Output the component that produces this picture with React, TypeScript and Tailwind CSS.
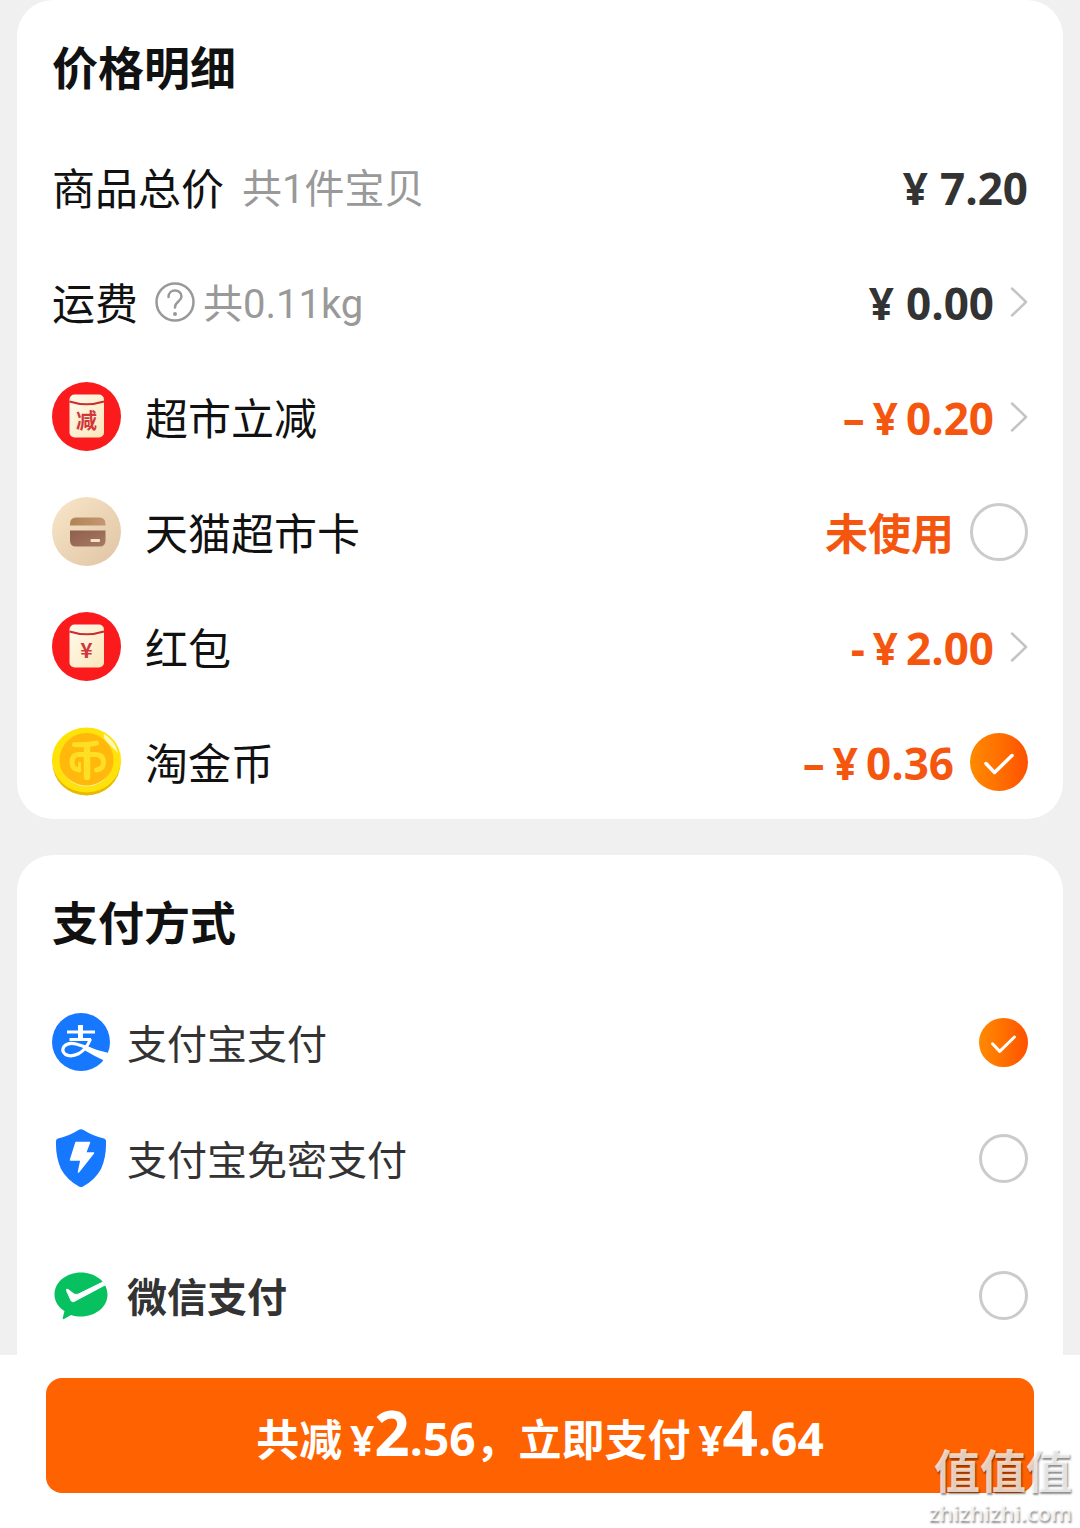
import { useState, type ReactNode } from "react";

function PacketIcon({ mark, size }: { mark: string; size: number }) {
  return (
    <svg viewBox="0 0 69 69" className="size-[69px] shrink-0" aria-hidden="true">
      <defs>
        <linearGradient id="packet" x1="0" y1="0" x2="1" y2="1">
          <stop offset="0" stopColor="#fffbf0" />
          <stop offset="1" stopColor="#fbe6b8" />
        </linearGradient>
      </defs>
      <circle cx="34.5" cy="34.5" r="34.5" fill="#fb1a1c" />
      <rect x="17.5" y="12.5" width="34.5" height="43" rx="5" fill="url(#packet)" />
      <path d="M17.5 19.5Q34.5 25 52 19.5" fill="none" stroke="#c9302b" strokeWidth="2" />
      <text x="34.5" y={38 + size * 0.36} textAnchor="middle" fontSize={size} fontWeight="700" fill="#d0373a">
        {mark}
      </text>
    </svg>
  );
}

function CardIcon() {
  return (
    <svg viewBox="0 0 69 69" className="size-[69px] shrink-0" aria-hidden="true">
      <defs>
        <linearGradient id="cardDisc" x1="0" y1="0" x2="1" y2="1">
          <stop offset="0" stopColor="#f9e6c9" />
          <stop offset="1" stopColor="#dfc4a4" />
        </linearGradient>
        <linearGradient id="cardTop" x1="0" y1="0" x2="1" y2="0">
          <stop offset="0" stopColor="#b08455" />
          <stop offset="1" stopColor="#c39872" />
        </linearGradient>
        <linearGradient id="cardBody" x1="0" y1="0" x2="1" y2="1">
          <stop offset="0" stopColor="#8f5f4d" />
          <stop offset="1" stopColor="#a67a64" />
        </linearGradient>
      </defs>
      <circle cx="34.5" cy="34.5" r="34.5" fill="url(#cardDisc)" />
      <path d="M18 28.500V27Q18 20.500 24 20.500H47.500Q53.500 20.500 53.500 27V28.500Z" fill="url(#cardTop)" />
      <path d="M18 33.500H53.500V43.500Q53.500 49.500 47.500 49.500H24Q18 49.500 18 43.500Z" fill="url(#cardBody)" />
      <rect x="38.500" y="42" width="9.500" height="3" rx="1" fill="#f6e2cb" />
    </svg>
  );
}

function CoinIcon() {
  return (
    <svg viewBox="0 0 69 69" className="size-[69px] shrink-0" aria-hidden="true">
      <ellipse cx="34.5" cy="36" rx="34" ry="32.500" fill="#e9b800" />
      <ellipse cx="34.500" cy="33" rx="34.500" ry="32.500" fill="#ffe20a" />
      <circle cx="34.500" cy="33" r="27" fill="#ffb80b" />
      <path d="M10 44A27 27 0 0 0 59 44A28 28 0 0 1 10 44Z" fill="#fff27a" />
      <path d="M52 7Q56 9 61 15Q65 20 66 26Q60 20 55 15Q51 11 52 7Z" fill="#fff9b8" />
      <g fill="none" stroke="#ffdf24" strokeLinecap="round" strokeLinejoin="round">
        <path d="M22.500 17.500Q34 18.500 44.500 16" strokeWidth="5" />
        <path d="M35 19V50" strokeWidth="6.500" />
        <path d="M27 43Q20 42 20 35.500Q20 27.500 27 27.500H43Q51.500 27.500 51.500 35.500Q51.500 42 44.500 43" strokeWidth="5" />
        <path d="M27.500 36V42" strokeWidth="3" />
      </g>
    </svg>
  );
}

function AlipayIcon() {
  return (
    <svg viewBox="0 0 58 58" className="size-[58px] shrink-0" aria-hidden="true">
      <circle cx="29" cy="29" r="29" fill="#1677ff" />
      <g fill="none" stroke="#fff">
        <path d="M15 19H43M17.500 26.500H39" strokeWidth="3" />
        <path d="M28.500 12V26" strokeWidth="5" />
        <path d="M38.500 26Q34.500 36 27 40.500Q19 44.500 13.500 41.500Q9 38 12 33.500Q16 29 24 31Q30 32.500 38 36" strokeWidth="3.200" />
      </g>
      <path d="M36 33.500Q46 38 56.800 40L53 48Q43 43.500 33 37.500Z" fill="#fff" />
    </svg>
  );
}

function ShieldIcon() {
  return (
    <svg viewBox="0 0 58 58" className="size-[58px] shrink-0" aria-hidden="true">
      <path d="M26.500 1Q29 -0.500 31.500 1Q41 7 52 9.500Q54.200 10 54 12.500Q54.500 28 49 40Q43 51 31 57.500Q29 58.500 27 57.500Q15 51 9 40Q3.500 28 4 12.500Q3.800 10 6 9.500Q17 7 26.500 1Z" fill="#1677ff" />
      <path d="M24 13.500H37.500L33.500 24H41.500L26.500 43L29 31H18.500Z" fill="#fff" stroke="#fff" strokeWidth="1.500" strokeLinejoin="round" />
    </svg>
  );
}

function WechatPayIcon() {
  return (
    <svg viewBox="0 0 58 58" className="size-[58px] shrink-0" aria-hidden="true">
      <path
        d="M29 6.500C43.500 6.500 55.500 16 55.500 28.500S43.500 50.500 29 50.500C25.500 50.500 22 50 19 49L12 53Q10.500 53.500 10.700 52L12.500 45C6 41 2.500 35 2.500 28.500C2.500 16 14.500 6.500 29 6.500Z"
        fill="#07c160"
      />
      <path d="M14.500 24.500Q14 22.500 16 23.500L22 28Q24 29 26.500 28L51 16L54 18.500L22 35.500Q20 36.500 19 34.500Z" fill="#fff" stroke="#fff" strokeLinejoin="round" />
    </svg>
  );
}

function HelpIcon() {
  return (
    <svg viewBox="0 0 40 40" className="size-10" fill="none" stroke="#999" strokeWidth="2.500" strokeLinecap="round" aria-hidden="true">
      <circle cx="20" cy="20" r="18.500" />
      <path d="M13.500 15C13.500 6.500 26.500 6.500 26.500 14.500C26.500 19.500 20 19 20 25.500" />
      <circle cx="20" cy="32" r="2" fill="#999" stroke="none" />
    </svg>
  );
}

function Chevron() {
  return (
    <svg viewBox="0 0 18 32" className="h-8 w-[18px] shrink-0" fill="none" stroke="#c4c4c4" strokeWidth="2.500" strokeLinecap="round" strokeLinejoin="round" aria-hidden="true">
      <path d="M2 2.500L16 16L2 29.500" />
    </svg>
  );
}

function Tick() {
  return (
    <svg viewBox="0 0 58 58" className="pointer-events-none absolute inset-0 hidden size-full peer-checked:block" fill="none" stroke="#fff" strokeWidth="3.500" strokeLinecap="round" strokeLinejoin="round" aria-hidden="true">
      <path d="M16 30.500L24.500 39.500L42 22.500" />
    </svg>
  );
}

const mark =
  "peer size-full appearance-none rounded-full border-3 border-[#cbcbcb] bg-white checked:border-0 checked:bg-linear-to-r checked:from-[#ff8a00] checked:to-[#ff5000]";

function Toggle({ id, initial }: { id: string; initial: boolean }) {
  const [on, setOn] = useState(initial);
  return (
    <span className="relative block size-[58px] shrink-0">
      <input id={id} type="checkbox" checked={on} onChange={() => setOn(!on)} className={mark} />
      <Tick />
    </span>
  );
}

function Section({ title, children }: { title: string; children: ReactNode }) {
  return (
    <section className="px-[35px]">
      <h2 className="flex h-[129px] items-start pt-10 text-[46px] leading-[50px] font-bold text-[#111]">{title}</h2>
      {children}
    </section>
  );
}

function Row({ children }: { children: ReactNode }) {
  return <div className="flex h-[115px] items-center justify-between text-[43px] leading-none">{children}</div>;
}

const note = "font-['Roboto','Noto_Sans_CJK_SC',sans-serif] pt-1.5 text-[40px] text-[#999]";
const digits = "font-['Open_Sans','Noto_Sans_CJK_SC',sans-serif] pt-0.5 text-[44px] font-bold";

function Price({ value }: { value: string }) {
  return (
    <span className={`flex gap-3 text-[#333] ${digits}`}>
      <span>¥</span>
      <span>{value}</span>
    </span>
  );
}

function Saving({ sign, value }: { sign: string; value: string }) {
  return (
    <span className={`flex gap-2 text-[#f4560f] ${digits}`}>
      <span>{sign}</span>
      <span>¥</span>
      <span>{value}</span>
    </span>
  );
}

const end = "flex items-center gap-4";

const methods = [
  { id: "alipay", label: "支付宝支付", icon: <AlipayIcon />, row: "" },
  { id: "alipay-fast", label: "支付宝免密支付", icon: <ShieldIcon />, row: "" },
  { id: "wechat", label: "微信支付", icon: <WechatPayIcon />, row: "mt-[21px] font-bold" },
];

function ButtonPrice({ whole, cents }: { whole: string; cents: string }) {
  return (
    <span className="ml-2 font-['Open_Sans',sans-serif] text-[46px] font-bold">
      <span className="text-[42px]">¥</span>
      <span className="text-[62px]">{whole}</span>
      {cents}
    </span>
  );
}

export default function App() {
  const [method, setMethod] = useState("alipay");
  return (
    <div className="relative flex min-h-screen flex-col bg-[#f0f0f0] font-['Noto_Sans_CJK_SC',sans-serif] text-[#111]" lang="zh-CN">
      <main className="flex grow flex-col gap-9 px-[17px]">
        <div className="rounded-[36px] bg-white">
          <Section title="价格明细">
            <Row>
              <div className="flex items-center gap-[18px]">
                <span>商品总价</span>
                <span className={note}>共1件宝贝</span>
              </div>
              <Price value="7.20" />
            </Row>
            <Row>
              <div className="flex items-center">
                <span>运费</span>
                <button type="button" aria-label="运费说明" className="mr-2 ml-[17px]">
                  <HelpIcon />
                </button>
                <span className={note}>共0.11kg</span>
              </div>
              <button type="button" className={end}>
                <Price value="0.00" />
                <Chevron />
              </button>
            </Row>
            <Row>
              <div className="flex items-center gap-6">
                <PacketIcon mark="减" size={21} />
                <span>超市立减</span>
              </div>
              <button type="button" className={end}>
                <Saving sign="–" value="0.20" />
                <Chevron />
              </button>
            </Row>
            <Row>
              <label htmlFor="card" className="flex items-center gap-6">
                <CardIcon />
                <span>天猫超市卡</span>
              </label>
              <div className={end}>
                <span className="font-bold text-[#f4560f]">未使用</span>
                <Toggle id="card" initial={false} />
              </div>
            </Row>
            <Row>
              <div className="flex items-center gap-6">
                <PacketIcon mark="¥" size={21} />
                <span>红包</span>
              </div>
              <button type="button" className={end}>
                <Saving sign="-" value="2.00" />
                <Chevron />
              </button>
            </Row>
            <Row>
              <label htmlFor="coin" className="flex items-center gap-6">
                <CoinIcon />
                <span>淘金币</span>
              </label>
              <div className={end}>
                <Saving sign="–" value="0.36" />
                <Toggle id="coin" initial={true} />
              </div>
            </Row>
          </Section>
        </div>

        <div className="grow rounded-t-[36px] bg-white">
          <Section title="支付方式">
            {methods.map((m) => (
              <div key={m.id} className={`flex h-[116px] items-center justify-between text-[40px] leading-none text-[#333] ${m.row}`}>
                <label htmlFor={m.id} className="flex items-center gap-[17px]">
                  {m.icon}
                  <span>{m.label}</span>
                </label>
                <span className="relative block size-[49px] shrink-0">
                  <input id={m.id} type="radio" name="method" checked={method === m.id} onChange={() => setMethod(m.id)} className={mark} />
                  <Tick />
                </span>
              </div>
            ))}
          </Section>
        </div>
      </main>

      <footer className="bg-white px-[46px] pt-[23px] pb-[35px]">
        <button type="button" className="flex h-[115px] w-full items-baseline justify-center rounded-[16px] bg-[#ff6200] text-[43px] leading-[108px] font-bold text-white">
          <span>共减</span>
          <ButtonPrice whole="2" cents=".56" />
          <span>，立即支付</span>
          <ButtonPrice whole="4" cents=".64" />
        </button>
      </footer>

      <div className="pointer-events-none absolute right-2 bottom-1 text-right font-bold text-white/75 [text-shadow:1px_2px_2px_rgba(0,0,0,0.45)]">
        <div className="pb-2 text-[46px] leading-[48px]">值值值</div>
        <div className="font-['Open_Sans',sans-serif] text-[22px] leading-6 font-semibold">zhizhizhi.com</div>
      </div>
    </div>
  );
}
